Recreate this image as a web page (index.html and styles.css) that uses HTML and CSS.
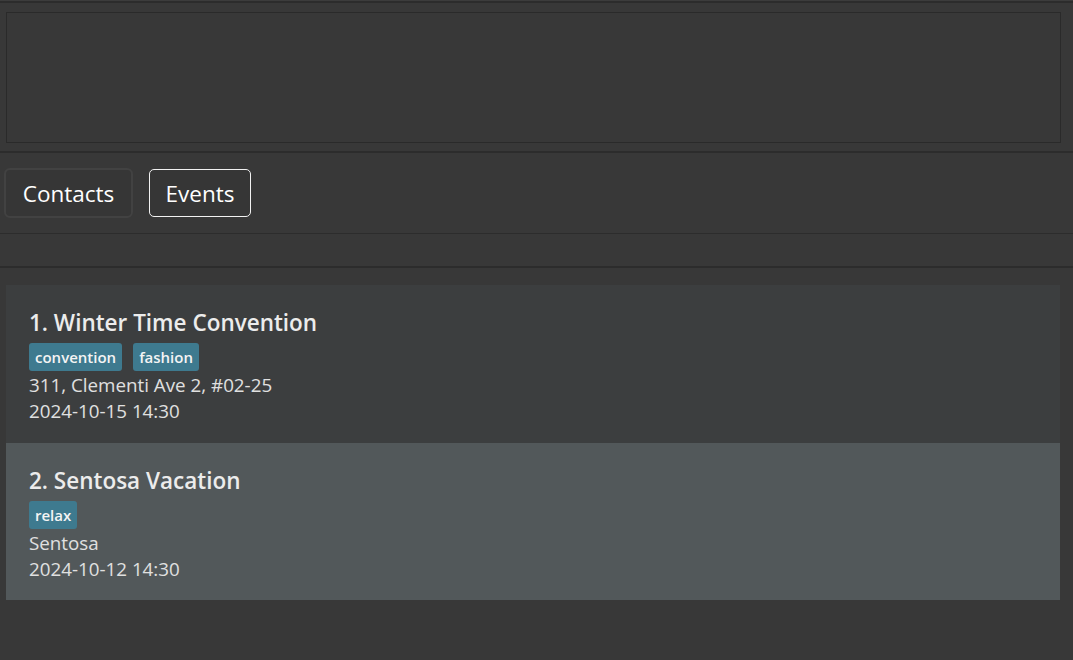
FILE: index.html
```html
<!DOCTYPE html>
<html lang="en">
<head>
<meta charset="utf-8">
<title>Events</title>
<link rel="stylesheet" href="styles.css">
</head>
<body>
<div class="app">
  <div class="topline"></div>
  <section class="result">
    <div class="result-box"></div>
  </section>
  <nav class="tabs">
    <button class="tab tab-contacts">Contacts</button>
    <button class="tab tab-events">Events</button>
  </nav>
  <div class="status"></div>
  <main class="list">
    <article class="card">
      <h2 class="card-title">1. Winter Time Convention</h2>
      <div class="tags">
        <span class="tag">convention</span>
        <span class="tag">fashion</span>
      </div>
      <div class="line">311, Clementi Ave 2, #02-25</div>
      <div class="line">2024-10-15 14:30</div>
    </article>
    <article class="card card-selected">
      <h2 class="card-title">2. Sentosa Vacation</h2>
      <div class="tags">
        <span class="tag">relax</span>
      </div>
      <div class="line">Sentosa</div>
      <div class="line">2024-10-12 14:30</div>
    </article>
  </main>
</div>
</body>
</html>
```

FILE: styles.css
```css
html, body {
  margin: 0;
  padding: 0;
  background: #383838;
  height: 100%;
}

.app {
  font-family: "Open Sans", "Noto Sans", sans-serif;
  color: #e6e6e6;
  display: flex;
  flex-direction: column;
  min-height: 100%;
}

.topline {
  height: 2px;
  border-top: 1px solid #3c3c3c;
  background: #2c2c2c;
}

.result {
  padding: 9px 12px 8px 6px;
  border-bottom: 2px solid #2c2c2c;
}

.result-box {
  height: 129px;
  border: 1px solid #2a2a2a;
  background: #383838;
}

.tabs {
  height: 81px;
  box-sizing: border-box;
  display: flex;
  align-items: center;
  gap: 16px;
  padding-left: 4px;
  border-bottom: 1px solid #2c2c2c;
}

.tab {
  font-family: inherit;
  font-size: 22.5px;
  color: #ffffff;
  background: #363636;
  border-radius: 5px;
  cursor: pointer;
  padding: 0;
  box-sizing: border-box;
}

.tab-contacts {
  width: 129px;
  height: 50px;
  border: 2px solid #424242;
  border-radius: 6px;
}

.tab-events {
  width: 102px;
  height: 48px;
  border: 1px solid #f2f2f2;
}

.status {
  height: 32px;
  border-bottom: 2px solid #2c2c2c;
}

.list {
  padding: 17px 13px 0 6px;
  display: flex;
  flex-direction: column;
}

.card {
  background: #3c3e3f;
  padding: 22px 23px 0 23px;
  height: 158px;
  box-sizing: border-box;
}

.card-selected {
  background: #52585a;
  height: 157px;
}

.card-title {
  margin: 0;
  font-size: 22.5px;
  font-weight: 600;
  line-height: 32px;
  color: #ececec;
}

.tags {
  display: flex;
  gap: 11px;
  margin-top: 4px;
  margin-bottom: 1px;
}

.tag {
  background: #3e7a8f;
  color: #f4f4f4;
  font-size: 15px;
  font-weight: 600;
  height: 28px;
  line-height: 28px;
  padding: 0 6px;
  border-radius: 3px;
}

.line {
  font-size: 18.8px;
  line-height: 26px;
  color: #e0e0e0;
}
```
